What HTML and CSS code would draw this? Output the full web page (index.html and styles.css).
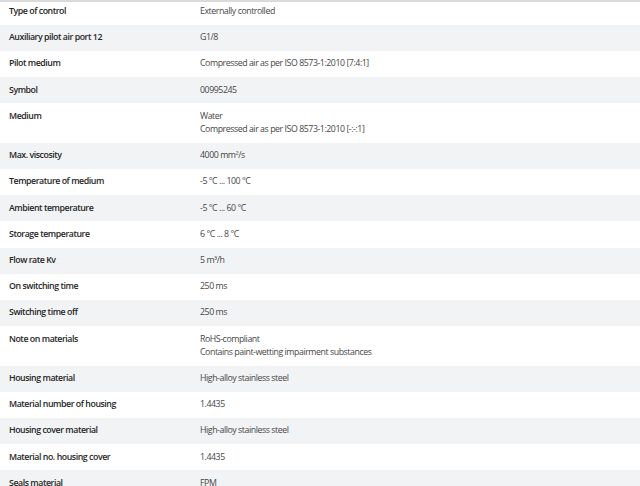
FILE: index.html
```html
<!DOCTYPE html>
<html lang="en">
<head>
<meta charset="utf-8">
<title>Technical data</title>
<link rel="stylesheet" href="styles.css">
</head>
<body>
<div class="specs">
  <div class="row"><div class="label">Type of control</div><div class="value">Externally controlled</div></div>
  <div class="row"><div class="label">Auxiliary pilot air port 12</div><div class="value">G1/8</div></div>
  <div class="row"><div class="label">Pilot medium</div><div class="value">Compressed air as per ISO 8573-1:2010 [7:4:1]</div></div>
  <div class="row"><div class="label">Symbol</div><div class="value">00995245</div></div>
  <div class="row"><div class="label">Medium</div><div class="value">Water<br>Compressed air as per ISO 8573-1:2010 [-:-:1]</div></div>
  <div class="row"><div class="label">Max. viscosity</div><div class="value">4000 mm²/s</div></div>
  <div class="row"><div class="label">Temperature of medium</div><div class="value">-5 °C ... 100 °C</div></div>
  <div class="row"><div class="label">Ambient temperature</div><div class="value">-5 °C ... 60 °C</div></div>
  <div class="row"><div class="label">Storage temperature</div><div class="value">6 °C ... 8 °C</div></div>
  <div class="row"><div class="label">Flow rate Kv</div><div class="value">5 m³/h</div></div>
  <div class="row"><div class="label">On switching time</div><div class="value">250 ms</div></div>
  <div class="row"><div class="label">Switching time off</div><div class="value">250 ms</div></div>
  <div class="row"><div class="label">Note on materials</div><div class="value">RoHS-compliant<br>Contains paint-wetting impairment substances</div></div>
  <div class="row"><div class="label">Housing material</div><div class="value">High-alloy stainless steel</div></div>
  <div class="row"><div class="label">Material number of housing</div><div class="value">1.4435</div></div>
  <div class="row"><div class="label">Housing cover material</div><div class="value">High-alloy stainless steel</div></div>
  <div class="row"><div class="label">Material no. housing cover</div><div class="value">1.4435</div></div>
  <div class="row"><div class="label">Seals material</div><div class="value">FPM</div></div>
</div>
</body>
</html>
```
FILE: styles.css
```css
html, body {
  margin: 0;
  padding: 0;
  background: #ffffff;
}
body {
  font-family: "Open Sans", "Noto Sans", sans-serif;
  font-size: 8.8px;
  letter-spacing: -0.45px;
  color: #3c3c3c;
  overflow: hidden;
}
.specs {
  border-top: 2px solid #dadada;
}
.row {
  display: grid;
  grid-template-columns: 191px 1fr;
  padding: 6.5px 9px 6.5px 9px;
  line-height: 13.2px;
}
.row:first-child {
  padding-top: 3px;
}
.row:nth-child(even) {
  background: #f2f3f5;
}
.label {
  font-weight: 600;
  color: #262626;
}
.value {
  color: #474747;
}
```
